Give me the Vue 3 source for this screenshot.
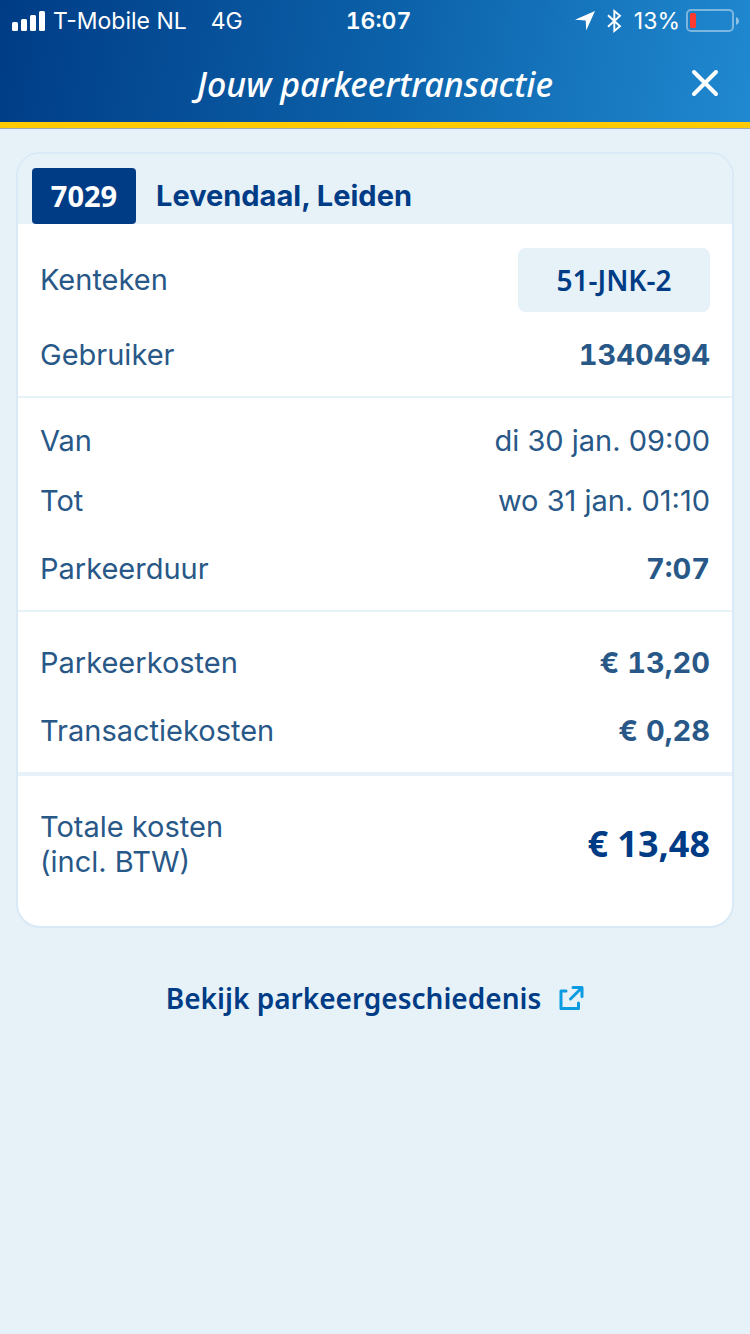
<script setup>
const user = [{ label: 'Gebruiker', value: '1340494', strong: true }]
const period = [
  { label: 'Van', value: 'di 30 jan. 09:00' },
  { label: 'Tot', value: 'wo 31 jan. 01:10' },
  { label: 'Parkeerduur', value: '7:07', strong: true, spaced: true },
]
const costs = [
  { label: 'Parkeerkosten', value: '€ 13,20', strong: true },
  { label: 'Transactiekosten', value: '€ 0,28', strong: true, spaced: true },
]
</script>

<template>
  <div class="screen">
    <header class="top">
      <div class="status">
        <div class="status-left">
          <svg class="signal" width="34" height="20" viewBox="0 0 34 20" fill="#fff" aria-hidden="true">
            <rect x="0" y="11" width="6" height="9" rx="1.5" />
            <rect x="9" y="8" width="6" height="12" rx="1.5" />
            <rect x="18" y="4" width="6" height="16" rx="1.5" />
            <rect x="27" y="0" width="6" height="20" rx="1.5" />
          </svg>
          <span class="carrier">T-Mobile NL</span>
          <span>4G</span>
        </div>
        <span class="clock">16:07</span>
        <div class="status-right">
          <svg class="location" width="20" height="20" viewBox="0 0 20 20" fill="#fff" aria-hidden="true">
            <path d="M20 0 11.2 19.6 10.7 9.4 0 8.8Z" />
          </svg>
          <svg class="bluetooth" width="15" height="24" viewBox="0 0 15 24" fill="none" stroke="#fff" stroke-width="1.9" aria-hidden="true">
            <path d="M1 6.2 13 17.3 7.3 22V2L13 6.7 1 17.8" />
          </svg>
          <span class="percent">13%</span>
          <svg width="53" height="24" viewBox="0 0 53 24" aria-hidden="true">
            <rect x="1" y="1" width="46" height="21" rx="4" fill="none" stroke="#fff" stroke-opacity=".42" stroke-width="2" />
            <rect x="4" y="4" width="6" height="15" rx="1.5" fill="#ff3b30" />
            <path d="M50 8c1.8.7 3 2 3 4s-1.2 3.300-3 4Z" fill="#fff" fill-opacity=".5" />
          </svg>
        </div>
      </div>
      <div class="titlebar">
        <h1>Jouw parkeertransactie</h1>
        <button class="close" type="button" aria-label="Sluiten">
          <svg width="28" height="28" viewBox="0 0 28 28" fill="none" stroke="#fff" stroke-width="4" stroke-linecap="round" aria-hidden="true">
            <path d="M3 3 25 25M25 3 3 25" />
          </svg>
        </button>
      </div>
    </header>

    <main>
      <section class="card">
        <div class="card-head">
          <span class="zone">7029</span>
          <h2>Levendaal, Leiden</h2>
        </div>
        <dl class="group vehicle">
          <div class="row">
            <dt>Kenteken</dt>
            <dd class="plate">51-JNK-2</dd>
          </div>
          <div v-for="r in user" :key="r.label" class="row">
            <dt>{{ r.label }}</dt>
            <dd class="strong">{{ r.value }}</dd>
          </div>
        </dl>
        <dl class="group period">
          <div v-for="r in period" :key="r.label" class="row" :class="{ spaced: r.spaced }">
            <dt>{{ r.label }}</dt>
            <dd :class="{ strong: r.strong }">{{ r.value }}</dd>
          </div>
        </dl>
        <dl class="group costs">
          <div v-for="r in costs" :key="r.label" class="row" :class="{ spaced: r.spaced }">
            <dt>{{ r.label }}</dt>
            <dd :class="{ strong: r.strong }">{{ r.value }}</dd>
          </div>
        </dl>
        <dl class="group total">
          <div class="row">
            <dt>Totale kosten<br />(incl. BTW)</dt>
            <dd class="amount">€ 13,48</dd>
          </div>
        </dl>
      </section>

      <a class="history" href="#">
        <span>Bekijk parkeergeschiedenis</span>
        <svg width="26" height="26" viewBox="0 0 26 26" fill="none" stroke="#0a9be0" stroke-width="3" stroke-linecap="round" stroke-linejoin="round" aria-hidden="true">
          <path d="M8 6H3V23.500H20.500V18" />
          <path d="M12.500 14 23 3.500M15 2.500H24V11.500" />
        </svg>
      </a>
    </main>
  </div>
</template>

<style>
body {
  background: #e6f1f8;
}
</style>

<style scoped>
.screen {
  min-height: 100vh;
  background: #e6f1f8;
  color: #285887;
  font-family: Inter, "Liberation Sans", sans-serif;
  font-size: 29px;
  line-height: 36px;
}
h1, h2, dl, dd {
  margin: 0;
}
.top {
  background: linear-gradient(100deg, #003c86 0%, #0b60a8 50%, #2089d0 100%);
  border-bottom: 6px solid #ffcb00;
  box-shadow: 0 1px 0 #9aa9b5;
  color: #fff;
}
.status {
  display: grid;
  grid-template-columns: 1fr auto 1fr;
  align-items: center;
  height: 42px;
  padding: 0 11px 0 12px;
  font-size: 23px;
}
.status-left,
.status-right {
  display: flex;
  align-items: center;
}
.status-right {
  justify-content: flex-end;
}
.signal {
  margin-right: 7px;
}
.carrier {
  margin-right: 24px;
}
.clock {
  padding-left: 6px;
  font-weight: 600;
  font-variant-numeric: tabular-nums;
}
.location {
  margin-right: 12px;
}
.bluetooth {
  margin-right: 12px;
}
.percent {
  margin-right: 6px;
}
.titlebar {
  display: grid;
  grid-template-columns: 60px 1fr 60px;
  align-items: center;
  height: 80px;
  padding: 0 15px;
}
h1 {
  grid-column: 2;
  padding-top: 4px;
  text-align: center;
  font: italic 500 34px/44px "Noto Sans", sans-serif;
}
.close {
  display: grid;
  place-items: center;
  height: 60px;
  padding: 2px 0 0;
  border: 0;
  background: none;
}
main {
  padding: 24px 16px;
}
.card {
  overflow: hidden;
  border: 2px solid #d9e9f5;
  border-radius: 24px;
  background: #fff;
}
.card-head {
  display: flex;
  align-items: flex-end;
  gap: 20px;
  padding: 14px 14px 0;
  background: #e6f1f8;
}
.zone {
  min-width: 104px;
  border-radius: 4px;
  background: #003c86;
  color: #fff;
  text-align: center;
  font: 700 29px/56px "Noto Sans", sans-serif;
}
h2 {
  color: #003c86;
  font-size: 29px;
  font-weight: 700;
  line-height: 56px;
}
.group {
  padding: 0 22px;
}
.group + .group {
  border-top: 2px solid #e6f1f8;
}
.vehicle {
  padding-top: 24px;
  padding-bottom: 23px;
}
.period {
  padding-top: 25px;
  padding-bottom: 23px;
}
.costs {
  padding-top: 33px;
  padding-bottom: 23px;
}
.group.total {
  padding-top: 33px;
  padding-bottom: 47px;
  border-top-width: 4px;
  line-height: 35px;
}
.row {
  display: flex;
  align-items: center;
  justify-content: space-between;
}
.row + .row {
  margin-top: 24px;
}
.vehicle .row + .row {
  margin-top: 25px;
}
.row + .row.spaced {
  margin-top: 32px;
}
.strong {
  font-weight: 700;
  font-variant-numeric: tabular-nums;
}
.plate {
  min-width: 192px;
  border-radius: 8px;
  background: #e6f1f8;
  color: #003c86;
  text-align: center;
  font: 600 28px/64px "Noto Sans", sans-serif;
}
.amount {
  color: #003c86;
  font: 700 36px/44px "Noto Sans", sans-serif;
}
.history {
  display: flex;
  align-items: center;
  justify-content: center;
  gap: 17px;
  margin-top: 48px;
  color: #003c86;
  font: 600 28px/44px "Noto Sans", sans-serif;
  text-decoration: none;
}
</style>
